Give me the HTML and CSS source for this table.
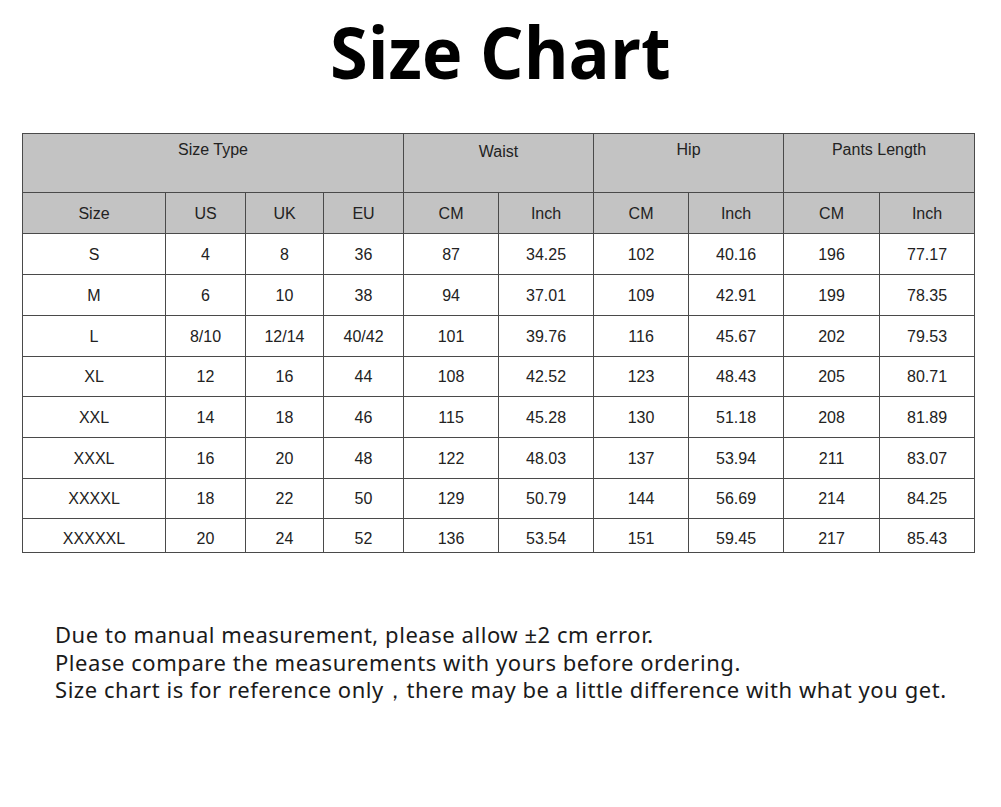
FILE: index.html
```html
<!DOCTYPE html>
<html>
<head>
<meta charset="utf-8">
<link rel="stylesheet" href="styles.css">
</head>
<body>
<div class="page">
  <h1 class="title">Size Chart</h1>
  <table class="chart">
    <colgroup>
      <col class="c-size"><col class="c-us"><col class="c-uk"><col class="c-eu">
      <col class="c-m"><col class="c-m"><col class="c-m"><col class="c-m"><col class="c-pl"><col class="c-m">
    </colgroup>
    <thead>
      <tr class="group">
        <th colspan="4">Size Type</th>
        <th colspan="2" class="waist">Waist</th>
        <th colspan="2">Hip</th>
        <th colspan="2">Pants Length</th>
      </tr>
      <tr class="sub">
        <th>Size</th><th>US</th><th>UK</th><th>EU</th>
        <th>CM</th><th>Inch</th><th>CM</th><th>Inch</th><th>CM</th><th>Inch</th>
      </tr>
    </thead>
    <tbody>
      <tr class="r41"><td>S</td><td>4</td><td>8</td><td>36</td><td>87</td><td>34.25</td><td>102</td><td>40.16</td><td>196</td><td>77.17</td></tr>
      <tr class="r41"><td>M</td><td>6</td><td>10</td><td>38</td><td>94</td><td>37.01</td><td>109</td><td>42.91</td><td>199</td><td>78.35</td></tr>
      <tr class="r41"><td>L</td><td>8/10</td><td>12/14</td><td>40/42</td><td>101</td><td>39.76</td><td>116</td><td>45.67</td><td>202</td><td>79.53</td></tr>
      <tr class="r40"><td>XL</td><td>12</td><td>16</td><td>44</td><td>108</td><td>42.52</td><td>123</td><td>48.43</td><td>205</td><td>80.71</td></tr>
      <tr class="r41"><td>XXL</td><td>14</td><td>18</td><td>46</td><td>115</td><td>45.28</td><td>130</td><td>51.18</td><td>208</td><td>81.89</td></tr>
      <tr class="r41"><td>XXXL</td><td>16</td><td>20</td><td>48</td><td>122</td><td>48.03</td><td>137</td><td>53.94</td><td>211</td><td>83.07</td></tr>
      <tr class="r40"><td>XXXXL</td><td>18</td><td>22</td><td>50</td><td>129</td><td>50.79</td><td>144</td><td>56.69</td><td>214</td><td>84.25</td></tr>
      <tr class="r34"><td>XXXXXL</td><td>20</td><td>24</td><td>52</td><td>136</td><td>53.54</td><td>151</td><td>59.45</td><td>217</td><td>85.43</td></tr>
    </tbody>
  </table>
  <div class="notes">
    <p>Due to manual measurement, please allow ±2 cm error.</p>
    <p>Please compare the measurements with yours before ordering.</p>
    <p>Size chart is for reference only，there may be a little difference with what you get.</p>
  </div>
</div>
</body>
</html>
```

FILE: styles.css
```css
html, body {
  margin: 0;
  padding: 0;
  background: #ffffff;
}

.page {
  width: 1001px;
  height: 807px;
  overflow: hidden;
  display: flex;
  flex-direction: column;
  align-items: flex-start;
}

.title {
  align-self: center;
  margin: 11px 0 0 0;
  height: 122px;
  font-family: "Open Sans", sans-serif;
  font-weight: 700;
  font-size: 72px;
  line-height: 80px;
  color: #000;
  letter-spacing: 0;
  transform: scaleX(0.95);
}

.chart {
  margin-left: 22px;
  border-collapse: collapse;
  table-layout: fixed;
  width: 953px;
  font-family: "Liberation Sans", Arial, sans-serif;
  font-size: 16px;
  color: #222;
}

.c-size { width: 143px; }
.c-us { width: 80px; }
.c-uk { width: 78px; }
.c-eu { width: 80px; }
.c-m { width: 95px; }
.c-pl { width: 96px; }

.chart th,
.chart td {
  border: 1px solid #4a4a4a;
  text-align: center;
  padding: 0;
  font-weight: 400;
  box-sizing: border-box;
}

.chart thead th {
  background: #c3c3c3;
}

.group th {
  height: 59px;
  vertical-align: top;
  padding-top: 7px;
}

.group th.waist {
  padding-top: 9px;
}

.sub th {
  height: 41px;
  padding-top: 1px;
}

.chart td {
  padding-top: 1px;
}

.r41 td { height: 41px; }
.r40 td { height: 40px; }
.r34 td { height: 34px; padding-top: 7px; }

.notes {
  margin: 68px 0 0 55px;
  font-family: "Noto Sans", "Open Sans", sans-serif;
  font-size: 22px;
  letter-spacing: 0.55px;
  line-height: 27.5px;
  color: #1a1a1a;
}

.notes p {
  margin: 0;
}
```
